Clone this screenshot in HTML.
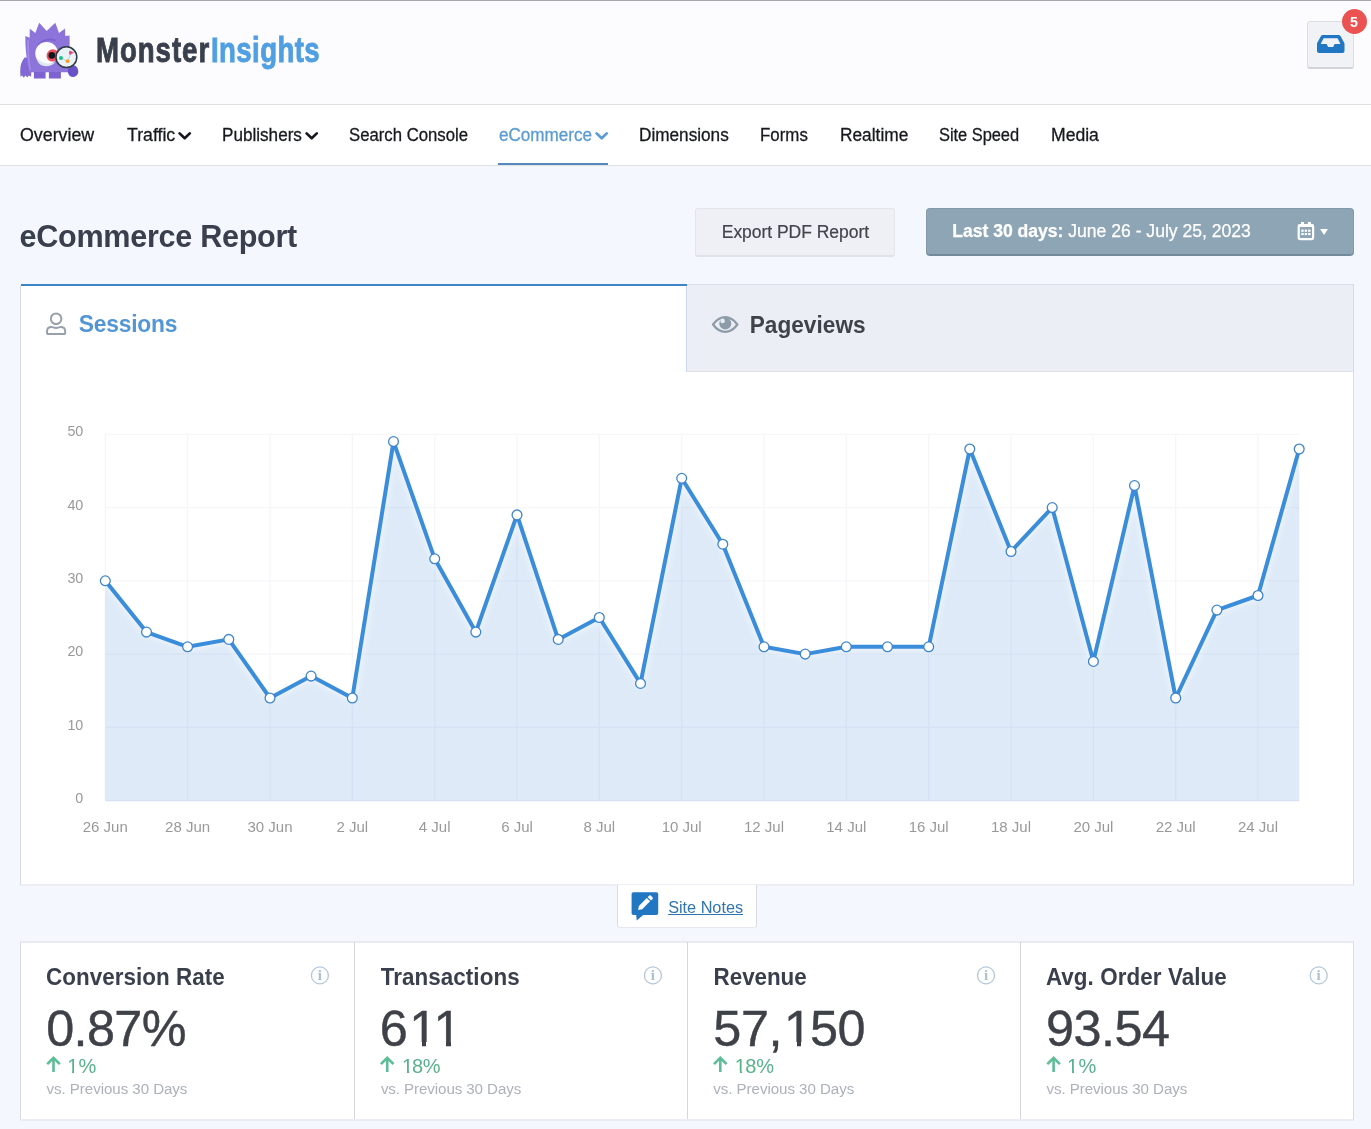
<!DOCTYPE html>
<html lang="en">
<head>
<meta charset="utf-8">
<title>eCommerce Report - MonsterInsights</title>
<style>
*{box-sizing:border-box;margin:0;padding:0}
html,body{width:1371px;height:1129px;overflow:hidden}
body{background:#f4f7fd;font-family:"Liberation Sans",Arial,sans-serif;color:#393f4c;position:relative}
#app{position:absolute;left:0;top:0;width:1371px;height:1129px;overflow:hidden;will-change:transform}
.abs{position:absolute}
.lay{left:0;top:0;pointer-events:none}
.t{position:absolute;line-height:1;white-space:nowrap;font-weight:normal;transform-origin:0 50%;text-decoration:none;display:block}
svg text{font-family:"Liberation Sans",Arial,sans-serif}
.topline{left:0;top:0;width:1371px;height:1px;background:#a6a6ab}
.header{left:0;top:0;width:1371px;height:105px;background:#fcfcff;border-bottom:1px solid #dfe0e4}
.inbox{left:1307px;top:21px;width:47px;height:48px;border-radius:3px;background:#f1f2f6;border:1px solid #dddee3;border-bottom:2px solid #d2d3d8}
.badge{left:1342px;top:9px;width:25px;height:25px;border-radius:50%;background:#eb5252}
.nav{left:0;top:105px;width:1371px;height:61px;background:#fff;border-bottom:1px solid #dedfe6}
.underline{left:498px;top:162.7px;width:110px;height:2.4px;background:#5589bb}
.btn-export{left:695px;top:208px;width:200px;height:49px;border-radius:3px;background:#eef0f6;border:1px solid #e3e5ec;border-bottom:2px solid #dfe2ea}
.btn-date{left:926px;top:208px;width:428px;height:48px;border-radius:4px;background:#8da5b5;border:1px solid #829aab;border-bottom:2px solid #728b9c}
.panel{left:20px;top:285px;width:1334px;height:601px;background:#fff;border:1px solid #d9dbe2;border-top-color:#e3e6ee;border-bottom:2px solid #eeeff6}
.tab1{left:20.5px;top:284px;width:666px;height:2px;background:#3c86c8}
.tab2{left:686px;top:284px;width:668px;height:88px;background:#ebeef5;border:1px solid #d9dde7;border-bottom-color:#dddfe6;border-left-color:#cbd9ea;border-right-color:#d9dbe2}
.notes{left:617px;top:885px;width:140px;height:43px;background:#fff;border:1px solid #d9dbe1;border-bottom-color:#e6e8ef;border-top:none;border-radius:0 0 3px 3px}
.cards{left:20px;top:941px;width:1334px;height:180px;background:#fff;border:1px solid #d9dbe2;border-top:2px solid #e8eaf3;border-bottom:2px solid #ecedf4}
.div{top:942px;width:1px;height:177px;background:#d5d6db}
.o{position:relative;display:inline-block;left:.033em}
.o.k{margin-left:-.074em}
.o i{position:absolute;background:#fff;height:.1em;top:.755em}
.o .fl{left:.04em;width:.2115em}
.o .fr{left:.3398em;width:.2em}
</style>
</head>
<body>
<div id="app">
<div class="abs header"></div>
<div class="abs topline"></div>
<div class="abs inbox"></div>
<div class="abs badge"></div>
<div class="abs nav"></div>
<div class="abs underline"></div>
<div class="abs btn-export"></div>
<div class="abs btn-date"></div>
<div class="abs panel"></div>
<div class="abs tab2"></div>
<div class="abs tab1"></div>
<div class="abs notes"></div>
<div class="abs cards"></div>
<div class="abs div" style="left:354px"></div>
<div class="abs div" style="left:687px"></div>
<div class="abs div" style="left:1020px"></div>
<svg class="abs lay" width="1371" height="1129" viewBox="0 0 1371 1129">
<g stroke="#f6f6f9" stroke-width="1.3" fill="none"><line x1="105.3" y1="800.6" x2="1299.2" y2="800.6"/><line x1="105.3" y1="727.3" x2="1299.2" y2="727.3"/><line x1="105.3" y1="654.1" x2="1299.2" y2="654.1"/><line x1="105.3" y1="580.8" x2="1299.2" y2="580.8"/><line x1="105.3" y1="507.6" x2="1299.2" y2="507.6"/><line x1="105.3" y1="434.3" x2="1299.2" y2="434.3"/><line x1="105.3" y1="434.3" x2="105.3" y2="800.6"/><line x1="187.6" y1="434.3" x2="187.6" y2="800.6"/><line x1="270.0" y1="434.3" x2="270.0" y2="800.6"/><line x1="352.3" y1="434.3" x2="352.3" y2="800.6"/><line x1="434.7" y1="434.3" x2="434.7" y2="800.6"/><line x1="517.0" y1="434.3" x2="517.0" y2="800.6"/><line x1="599.3" y1="434.3" x2="599.3" y2="800.6"/><line x1="681.7" y1="434.3" x2="681.7" y2="800.6"/><line x1="764.0" y1="434.3" x2="764.0" y2="800.6"/><line x1="846.3" y1="434.3" x2="846.3" y2="800.6"/><line x1="928.7" y1="434.3" x2="928.7" y2="800.6"/><line x1="1011.0" y1="434.3" x2="1011.0" y2="800.6"/><line x1="1093.4" y1="434.3" x2="1093.4" y2="800.6"/><line x1="1175.7" y1="434.3" x2="1175.7" y2="800.6"/><line x1="1258.0" y1="434.3" x2="1258.0" y2="800.6"/></g>
<defs><filter id="glow" x="-5%" y="-5%" width="110%" height="110%"><feGaussianBlur stdDeviation="3"/></filter></defs>
<path d="M105.3,801.2 L105.3,580.8 L146.5,632.1 L187.6,646.8 L228.8,639.4 L270.0,698.0 L311.1,676.1 L352.3,698.0 L393.5,441.6 L434.7,558.8 L475.8,632.1 L517.0,514.9 L558.2,639.4 L599.3,617.5 L640.5,683.4 L681.7,478.3 L722.8,544.2 L764.0,646.8 L805.2,654.1 L846.3,646.8 L887.5,646.8 L928.7,646.8 L969.8,449.0 L1011.0,551.5 L1052.2,507.6 L1093.4,661.4 L1134.5,485.6 L1175.7,698.0 L1216.9,610.1 L1258.0,595.5 L1299.2,449.0 L1299.2,801.2 Z" fill="#5a97da" fill-opacity="0.2"/>
<polyline points="105.3,580.8 146.5,632.1 187.6,646.8 228.8,639.4 270.0,698.0 311.1,676.1 352.3,698.0 393.5,441.6 434.7,558.8 475.8,632.1 517.0,514.9 558.2,639.4 599.3,617.5 640.5,683.4 681.7,478.3 722.8,544.2 764.0,646.8 805.2,654.1 846.3,646.8 887.5,646.8 928.7,646.8 969.8,449.0 1011.0,551.5 1052.2,507.6 1093.4,661.4 1134.5,485.6 1175.7,698.0 1216.9,610.1 1258.0,595.5 1299.2,449.0" fill="none" stroke="#fff" stroke-width="8" stroke-opacity="0.5" stroke-linejoin="round" filter="url(#glow)"/>
<polyline points="105.3,580.8 146.5,632.1 187.6,646.8 228.8,639.4 270.0,698.0 311.1,676.1 352.3,698.0 393.5,441.6 434.7,558.8 475.8,632.1 517.0,514.9 558.2,639.4 599.3,617.5 640.5,683.4 681.7,478.3 722.8,544.2 764.0,646.8 805.2,654.1 846.3,646.8 887.5,646.8 928.7,646.8 969.8,449.0 1011.0,551.5 1052.2,507.6 1093.4,661.4 1134.5,485.6 1175.7,698.0 1216.9,610.1 1258.0,595.5 1299.2,449.0" fill="none" stroke="#3a8ddb" stroke-width="4" stroke-linejoin="round" stroke-linecap="round"/>
<g fill="#fff" stroke="#3d85cf" stroke-width="1.3"><circle cx="105.3" cy="580.8" r="4.9"/><circle cx="146.5" cy="632.1" r="4.9"/><circle cx="187.6" cy="646.8" r="4.9"/><circle cx="228.8" cy="639.4" r="4.9"/><circle cx="270.0" cy="698.0" r="4.9"/><circle cx="311.1" cy="676.1" r="4.9"/><circle cx="352.3" cy="698.0" r="4.9"/><circle cx="393.5" cy="441.6" r="4.9"/><circle cx="434.7" cy="558.8" r="4.9"/><circle cx="475.8" cy="632.1" r="4.9"/><circle cx="517.0" cy="514.9" r="4.9"/><circle cx="558.2" cy="639.4" r="4.9"/><circle cx="599.3" cy="617.5" r="4.9"/><circle cx="640.5" cy="683.4" r="4.9"/><circle cx="681.7" cy="478.3" r="4.9"/><circle cx="722.8" cy="544.2" r="4.9"/><circle cx="764.0" cy="646.8" r="4.9"/><circle cx="805.2" cy="654.1" r="4.9"/><circle cx="846.3" cy="646.8" r="4.9"/><circle cx="887.5" cy="646.8" r="4.9"/><circle cx="928.7" cy="646.8" r="4.9"/><circle cx="969.8" cy="449.0" r="4.9"/><circle cx="1011.0" cy="551.5" r="4.9"/><circle cx="1052.2" cy="507.6" r="4.9"/><circle cx="1093.4" cy="661.4" r="4.9"/><circle cx="1134.5" cy="485.6" r="4.9"/><circle cx="1175.7" cy="698.0" r="4.9"/><circle cx="1216.9" cy="610.1" r="4.9"/><circle cx="1258.0" cy="595.5" r="4.9"/><circle cx="1299.2" cy="449.0" r="4.9"/></g>
<g class="ax" font-size="14.3" fill="#999"><text x="83.3" y="802.9" text-anchor="end">0</text><text x="83.3" y="729.6" text-anchor="end">10</text><text x="83.3" y="656.4" text-anchor="end">20</text><text x="83.3" y="583.1" text-anchor="end">30</text><text x="83.3" y="509.9" text-anchor="end">40</text><text x="83.3" y="435.6" text-anchor="end">50</text></g><g class="ax" font-size="15" fill="#999"><text x="105.3" y="832" text-anchor="middle">26 Jun</text><text x="187.6" y="832" text-anchor="middle">28 Jun</text><text x="270.0" y="832" text-anchor="middle">30 Jun</text><text x="352.3" y="832" text-anchor="middle">2 Jul</text><text x="434.7" y="832" text-anchor="middle">4 Jul</text><text x="517.0" y="832" text-anchor="middle">6 Jul</text><text x="599.3" y="832" text-anchor="middle">8 Jul</text><text x="681.7" y="832" text-anchor="middle">10 Jul</text><text x="764.0" y="832" text-anchor="middle">12 Jul</text><text x="846.3" y="832" text-anchor="middle">14 Jul</text><text x="928.7" y="832" text-anchor="middle">16 Jul</text><text x="1011.0" y="832" text-anchor="middle">18 Jul</text><text x="1093.4" y="832" text-anchor="middle">20 Jul</text><text x="1175.7" y="832" text-anchor="middle">22 Jul</text><text x="1258.0" y="832" text-anchor="middle">24 Jul</text></g>
</svg>
<svg class="abs lay" width="1371" height="1129" viewBox="0 0 1371 1129">
<g>
<path fill="#8268d4" d="M24.6,57.6 q-4.4,5.2 -4.4,13.6 l0.3,5.6 l1.7,-1.4 l1.5,2.4 l1.8,-2.2 l1.8,2 l1.6,-2.2 l2.1,1.4 l1.2,-19.2z"/>
<path fill="#8d74db" d="M25.3,36.0 l4.3,1.7 l0.2,-8.9 l5.5,4.3 l3.9,-10.3 l7.5,8.1 l8.6,-8.1 l3.7,10.1 l6,-4.3 l0.3,7.5 l4.3,-0.6 q0.3,15 -1.2,36.8 h-39.2 q-4.1,-18.5 -3.9,-36.3z"/>
<path fill="#7d63d2" d="M33.9,72 h11.7 v6.5 h-11.7z M48.9,72 h12 v6.5 h-12z"/>
<path fill="#a18be4" d="M27.2,40 q-0.6,14 2.2,30 h1.6 q-2.6,-16 -2,-30z"/>
<path fill="none" stroke="#7a5fce" stroke-width="1.8" stroke-linecap="round" d="M38.2,45.6 q6.6,-8.6 16.6,-5.4"/>
<circle cx="46.6" cy="53.2" r="11.3" fill="#fdfdff"/>
<path fill="#dce8f4" d="M36.4,58 q9,8.6 19.4,4 q-7,6.6 -14.4,3.2 q-4,-2 -5,-7.2z"/>
<path fill="#e8535f" d="M46.6,56.4 q-0.2,-4.6 3.8,-6.6 q3.6,-1.6 6.6,1 l-1,9.6 q-2.6,1.8 -5.6,0.8 q-3.4,-1.4 -3.8,-4.8z"/>
<circle cx="51.8" cy="55.4" r="3.3" fill="#15151c"/>
<path fill="#6a50c6" d="M68.8,66.6 q3.2,-2.6 6.4,-0.8 q3.4,2.2 3,6.4 q-0.8,4.4 -4.8,4.7 q-4.4,0 -5.4,-4.2 q-0.6,-3.4 0.8,-6.1z"/>
<circle cx="66.4" cy="57.2" r="10.4" fill="#e9f2f7" stroke="#2f3b42" stroke-width="1.5"/>
<path d="M61.2,58.2 L67.6,61.2 L71.4,52.6" fill="none" stroke="#b9c4cc" stroke-width="0.8"/>
<circle cx="61" cy="58" r="2" fill="#1ec185"/>
<circle cx="67.6" cy="61.2" r="1.9" fill="#f5a02c"/>
<path fill="#eb4a73" d="M69.6,50.6 l4.4,2 l-4.2,2.4 q-1.6,-2.2 -0.2,-4.4z"/>
</g>
</svg>

<svg class="abs lay" width="1371" height="1129" viewBox="0 0 1371 1129"><path fill="#2177c3" fill-rule="evenodd" d="M1322.6,35 h16 q1.2,0 1.9,1.1 l3.7,6.6 q0.3,0.6 0.3,1.3 v7 q0,2 -2,2 h-23.5 q-2,0 -2,-2 v-7 q0,-0.7 0.3,-1.3 l3.7,-6.6 q0.7,-1.1 1.6,-1.1z M1323.6,38.3 l-2.9,5.6 h5.9 l1.5,3 h5 l1.5,-3 h5.9 l-2.9,-5.6z"/><polyline points="179.6,133.4 184.7,138.3 189.79999999999998,133.4" fill="none" stroke="#17191e" stroke-width="2.7" stroke-linecap="round" stroke-linejoin="round"/><polyline points="306.59999999999997,133.4 311.7,138.3 316.8,133.4" fill="none" stroke="#17191e" stroke-width="2.7" stroke-linecap="round" stroke-linejoin="round"/><polyline points="596.6,133.4 601.7,138.3 606.8000000000001,133.4" fill="none" stroke="#5a9bd4" stroke-width="2.7" stroke-linecap="round" stroke-linejoin="round"/><g fill="none" stroke="#fff"><rect x="1298.7" y="225" width="14.4" height="14.1" rx="1.6" stroke-width="2.2"/></g><g fill="#fff"><rect x="1298.2" y="224.4" width="15.4" height="2.6"/><rect x="1301" y="222" width="3" height="3"/><rect x="1307.9" y="222" width="3" height="3"/><rect x="1301.3" y="229.6" width="2.4" height="2.2"/><rect x="1304.7" y="229.6" width="2.4" height="2.2"/><rect x="1308.1" y="229.6" width="2.4" height="2.2"/><rect x="1301.3" y="233" width="2.4" height="2.1"/><rect x="1304.7" y="233" width="2.4" height="2.1"/><rect x="1308.1" y="233" width="2.4" height="2.1"/><path d="M1320.1,228.9 h7.9 l-3.95,6.1z"/></g><g fill="none" stroke="#98a1ab" stroke-width="2" stroke-linejoin="round"><circle cx="56.1" cy="318.7" r="5.3"/><path d="M47,331.4 q0,-4.4 4.6,-4.4 q0.7,0 1.6,0.4 q2.9,1.1 5.8,0 q0.9,-0.4 1.6,-0.4 q4.6,0 4.6,4.4 v1.1 q0,1.6 -1.6,1.6 h-15 q-1.6,0 -1.6,-1.6z"/></g><path d="M713,324.5 q5.4,-7.3 12.2,-7.3 q6.8,0 12.2,7.3 q-5.4,7.3 -12.2,7.3 q-6.8,0 -12.2,-7.3z" fill="none" stroke="#8e9ca9" stroke-width="2.3" stroke-linejoin="round"/><circle cx="725.3" cy="323.6" r="6" fill="#8e9ca9"/><circle cx="722.6" cy="320.9" r="2.3" fill="#e6ebf4"/><path fill="#2277c3" d="M633.4,892.3 h23 q1.8,0 1.8,1.8 v19.1 q0,1.8 -1.8,1.8 h-13.2 l-6.5,5.4 l-0.5,-5.4 h-2.8 q-1.8,0 -1.8,-1.8 v-19.1 q0,-1.8 1.8,-1.8z"/><path fill="#fff" d="M638.1,910.1 l0.8,-4.2 l7.9,-7.9 l3.3,3.3 l-7.9,7.9z M647.7,897.2 l1.6,-1.6 q0.7,-0.7 1.4,0 l1.9,1.9 q0.7,0.7 0,1.4 l-1.6,1.6z"/><circle cx="319.9" cy="975.4" r="8.5" fill="none" stroke="#b3c8db" stroke-width="1.3"/><text x="319.9" y="980.4" text-anchor="middle" font-size="15" font-weight="bold" fill="#a9c1d3" style="font-family:'Liberation Serif',serif">i</text><circle cx="652.9" cy="975.4" r="8.5" fill="none" stroke="#b3c8db" stroke-width="1.3"/><text x="652.9" y="980.4" text-anchor="middle" font-size="15" font-weight="bold" fill="#a9c1d3" style="font-family:'Liberation Serif',serif">i</text><circle cx="986.0" cy="975.4" r="8.5" fill="none" stroke="#b3c8db" stroke-width="1.3"/><text x="986.0" y="980.4" text-anchor="middle" font-size="15" font-weight="bold" fill="#a9c1d3" style="font-family:'Liberation Serif',serif">i</text><circle cx="1318.7" cy="975.4" r="8.5" fill="none" stroke="#b3c8db" stroke-width="1.3"/><text x="1318.7" y="980.4" text-anchor="middle" font-size="15" font-weight="bold" fill="#a9c1d3" style="font-family:'Liberation Serif',serif">i</text><path d="M53.5,1072.1 V1057.8 M47.2,1064.1999999999998 L53.5,1057.8 L59.8,1064.1999999999998" fill="none" stroke="#5cbd97" stroke-width="2.6" stroke-linecap="butt" stroke-linejoin="miter"/><path d="M387.2,1072.1 V1057.8 M380.9,1064.1999999999998 L387.2,1057.8 L393.5,1064.1999999999998" fill="none" stroke="#5cbd97" stroke-width="2.6" stroke-linecap="butt" stroke-linejoin="miter"/><path d="M720.3,1072.1 V1057.8 M714.0,1064.1999999999998 L720.3,1057.8 L726.5999999999999,1064.1999999999998" fill="none" stroke="#5cbd97" stroke-width="2.6" stroke-linecap="butt" stroke-linejoin="miter"/><path d="M1053.6,1072.1 V1057.8 M1047.3,1064.1999999999998 L1053.6,1057.8 L1059.8999999999999,1064.1999999999998" fill="none" stroke="#5cbd97" stroke-width="2.6" stroke-linecap="butt" stroke-linejoin="miter"/></svg>
<header>
<span class="t" style="left:95.8px;top:32.7px;font-size:34.5px;color:#393f4c;font-weight:bold;letter-spacing:1.208px;transform:scaleX(0.8);-webkit-text-stroke:0.9px #393f4c;">Monster</span>
<span class="t" style="left:211.2px;top:32.7px;font-size:34.5px;color:#509fe2;font-weight:bold;letter-spacing:0.5px;transform:scaleX(0.8);-webkit-text-stroke:0.9px #509fe2;">Insights</span>
<span class="t" style="left:1350.1px;top:14.5px;font-size:14.2px;color:#fff;font-weight:bold;">5</span>
</header>
<nav>
<a class="t" style="left:20.47px;top:126.4px;font-size:18.3px;color:#17191e;transform:scaleX(0.9743);-webkit-text-stroke:0.3px;">Overview</a>
<a class="t" style="left:126.96px;top:126.4px;font-size:18.3px;color:#17191e;transform:scaleX(0.9685);-webkit-text-stroke:0.3px;">Traffic</a>
<a class="t" style="left:222.23px;top:126.4px;font-size:18.3px;color:#17191e;transform:scaleX(0.9361);-webkit-text-stroke:0.3px;">Publishers</a>
<a class="t" style="left:348.71px;top:126.4px;font-size:18.3px;color:#17191e;transform:scaleX(0.915);-webkit-text-stroke:0.3px;">Search Console</a>
<a class="t" style="left:499.13px;top:126.4px;font-size:18.3px;color:#5a9bd4;transform:scaleX(0.935);-webkit-text-stroke:0.3px;">eCommerce</a>
<a class="t" style="left:639.43px;top:126.4px;font-size:18.3px;color:#17191e;transform:scaleX(0.9397);-webkit-text-stroke:0.3px;">Dimensions</a>
<a class="t" style="left:760.45px;top:126.4px;font-size:18.3px;color:#17191e;transform:scaleX(0.924);-webkit-text-stroke:0.3px;">Forms</a>
<a class="t" style="left:839.82px;top:126.4px;font-size:18.3px;color:#17191e;transform:scaleX(0.9466);-webkit-text-stroke:0.3px;">Realtime</a>
<a class="t" style="left:939.33px;top:126.4px;font-size:18.3px;color:#17191e;letter-spacing:-0.046px;transform:scaleX(0.9);-webkit-text-stroke:0.3px;">Site Speed</a>
<a class="t" style="left:1050.5px;top:126.4px;font-size:18.3px;color:#17191e;transform:scaleX(0.9621);-webkit-text-stroke:0.3px;">Media</a>
</nav>
<main>
<h1 class="t" style="left:19.6px;top:221.0px;font-size:30.6px;color:#393f4c;font-weight:bold;letter-spacing:-0.307px;transform:scaleY(1.05);transform-origin:0 25.0px;">eCommerce Report</h1>
<span class="t" style="left:721.75px;top:224.2px;font-size:17.5px;color:#42454c;letter-spacing:-0.031px;-webkit-text-stroke:0.2px;">Export PDF Report</span>
<span class="t" style="left:952.2px;top:222.9px;font-size:17.6px;color:#fff;letter-spacing:-0.018px;-webkit-text-stroke:0.25px #fff;"><b>Last 30 days:</b> June 26 - July 25, 2023</span>
<span class="t" style="left:78.85px;top:312.5px;font-size:22.8px;color:#5396d6;font-weight:bold;letter-spacing:-0.229px;transform:scaleY(1.05);transform-origin:0 19.0px;">Sessions</span>
<span class="t" style="left:749.7px;top:315.1px;font-size:22.6px;color:#3f4249;font-weight:bold;letter-spacing:0.044px;transform:scaleY(1.05);transform-origin:0 18.0px;">Pageviews</span>
<a class="t" style="left:668.15px;top:898.6px;font-size:16.3px;color:#2f76b0;letter-spacing:-0.017px;text-decoration:underline;text-decoration-thickness:1.2px;text-underline-offset:0.8px;">Site Notes</a>
<section>
<h3 class="t" style="left:45.95px;top:967.2px;font-size:22.4px;color:#393f4c;font-weight:bold;letter-spacing:0.064px;transform:scaleY(1.05);transform-origin:0 18.0px;">Conversion Rate</h3>
<div class="t big" style="left:46.15px;top:1004.2px;font-size:50.4px;color:#3e4147;letter-spacing:-0.625px;-webkit-text-stroke:0.4px;">0.87%</div>
<span class="t sm" style="left:66.55px;top:1056.0px;font-size:20.0px;color:#57b28c;letter-spacing:0.8px;"><span class="o">1<i class="fl"></i><i class="fr"></i></span>%</span>
<span class="t" style="left:46.5px;top:1081.2px;font-size:15.1px;color:#acb1ba;letter-spacing:-0.045px;">vs. Previous 30 Days</span>
<h3 class="t" style="left:380.75px;top:967.2px;font-size:22.4px;color:#393f4c;font-weight:bold;letter-spacing:0.064px;transform:scaleY(1.05);transform-origin:0 18.0px;">Transactions</h3>
<div class="t big" style="left:379.65px;top:1004.2px;font-size:50.4px;color:#3e4147;letter-spacing:-0.125px;-webkit-text-stroke:0.4px;">6<span class="o">1<i class="fl"></i><i class="fr"></i></span><span class="o k">1<i class="fl"></i><i class="fr"></i></span></div>
<span class="t sm" style="left:401.25px;top:1056.0px;font-size:20.0px;color:#57b28c;letter-spacing:-0.325px;"><span class="o">1<i class="fl"></i><i class="fr"></i></span>8%</span>
<span class="t" style="left:380.9px;top:1081.2px;font-size:15.1px;color:#acb1ba;letter-spacing:-0.076px;">vs. Previous 30 Days</span>
<h3 class="t" style="left:713.6px;top:967.2px;font-size:22.4px;color:#393f4c;font-weight:bold;letter-spacing:-0.042px;transform:scaleY(1.05);transform-origin:0 18.0px;">Revenue</h3>
<div class="t big" style="left:713.25px;top:1004.2px;font-size:50.4px;color:#3e4147;letter-spacing:-0.35px;-webkit-text-stroke:0.4px;">57,<span class="o">1<i class="fl"></i><i class="fr"></i></span>50</div>
<span class="t sm" style="left:734.15px;top:1056.0px;font-size:20.0px;color:#57b28c;letter-spacing:-0.025px;"><span class="o">1<i class="fl"></i><i class="fr"></i></span>8%</span>
<span class="t" style="left:713.3px;top:1081.2px;font-size:15.1px;color:#acb1ba;letter-spacing:-0.045px;">vs. Previous 30 Days</span>
<h3 class="t" style="left:1045.9px;top:967.2px;font-size:22.4px;color:#393f4c;font-weight:bold;letter-spacing:0.087px;transform:scaleY(1.05);transform-origin:0 18.0px;">Avg. Order Value</h3>
<div class="t big" style="left:1046.0px;top:1004.2px;font-size:50.4px;color:#3e4147;letter-spacing:-0.525px;-webkit-text-stroke:0.4px;">93.54</div>
<span class="t sm" style="left:1066.45px;top:1056.0px;font-size:20.0px;color:#57b28c;letter-spacing:0.8px;"><span class="o">1<i class="fl"></i><i class="fr"></i></span>%</span>
<span class="t" style="left:1046.4px;top:1081.2px;font-size:15.1px;color:#acb1ba;letter-spacing:-0.045px;">vs. Previous 30 Days</span>
</section>
</main>
</div>
</body>
</html>
